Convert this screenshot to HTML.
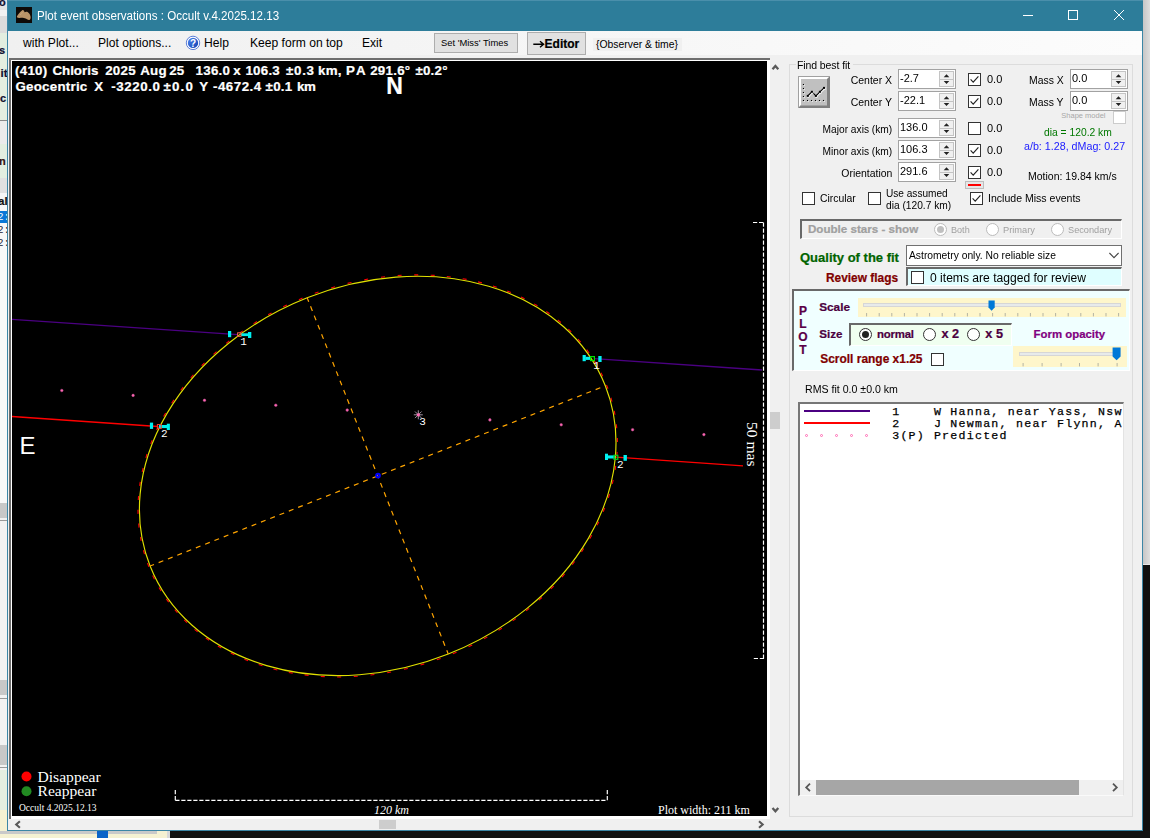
<!DOCTYPE html>
<html>
<head>
<meta charset="utf-8">
<title>Plot event observations : Occult v.4.2025.12.13</title>
<style>
html,body{margin:0;padding:0;}
body{width:1150px;height:838px;overflow:hidden;position:relative;background:#111;font-family:"Liberation Sans",sans-serif;font-size:11px;color:#000;}
div,span,svg{position:absolute;box-sizing:border-box;}
.t{white-space:nowrap;line-height:1;}
.b{font-weight:bold;-webkit-text-stroke:.22px;}
.ser{font-family:"Liberation Serif",serif;}
.mono{font-family:"Liberation Mono",monospace;}
#lst .mono{-webkit-text-stroke:.25px #000;}
#win{left:7px;top:0;width:1136px;height:831px;background:#f0f0f0;border-left:1px solid #3c86a6;border-right:1px solid #3c86a6;border-bottom:1px solid #3c86a6;}
#title{left:8px;top:0;width:1135px;height:31px;background:#2d7d9a;}
#plot{left:12px;top:61px;width:755px;height:755px;background:#000;overflow:hidden;}
.cb{width:13px;height:13px;background:#fff;border:1px solid #333;}
.num{background:#fff;border:1px solid #a2a2a2;height:20px;}
.rad{width:13px;height:13px;border-radius:50%;background:#fff;border:1px solid #333;}
.lbl{font-size:11px;}
.w1,.w2{font-size:13.33px;letter-spacing:.25px;}
.w1{top:3px;}.w2{top:19px;}
.sunk{border-top:2px solid #696969;border-left:2px solid #696969;border-right:1px solid #fff;border-bottom:1px solid #fff;}
</style>
</head>
<body>
<!-- background: other windows peeking out -->
<div id="bgleft" style="left:0;top:0;width:8px;height:838px;background:#f2f2f2;"></div>
<div style="left:0;top:0;width:7px;height:10px;background:#e4e4e4;"></div>
<div style="left:0;top:16px;width:7px;height:17px;background:#dcdcdc;"></div>
<div style="left:0;top:33px;width:7px;height:87px;background:#e3eee0;"></div>
<div style="left:0;top:120px;width:7px;height:1px;background:#888;"></div>
<div style="left:0;top:121px;width:7px;height:23px;background:#ebebeb;"></div>
<div style="left:0;top:144px;width:7px;height:34px;background:#e3eee0;"></div>
<div style="left:0;top:178px;width:7px;height:15px;background:#e0e0e0;"></div>
<div style="left:0;top:193px;width:7px;height:18px;background:#f6f6f6;"></div>
<div style="left:0;top:211px;width:7px;height:12px;background:#0a78d7;"></div>
<div style="left:0;top:223px;width:7px;height:280px;background:#f8f8f8;"></div>
<div style="left:0;top:503px;width:7px;height:15px;background:#c8c8c8;"></div>
<div style="left:0;top:520px;width:7px;height:1px;background:#999;"></div>
<div style="left:0;top:680px;width:7px;height:15px;background:#c8c8c8;"></div>
<div style="left:0;top:698px;width:7px;height:1px;background:#999;"></div>
<div style="left:0;top:745px;width:7px;height:20px;background:#c8c8c8;"></div>
<div style="left:0;top:767px;width:7px;height:1px;background:#999;"></div>
<div style="left:0;top:770px;width:7px;height:40px;background:#e3eee0;"></div>
<div style="left:0;top:810px;width:7px;height:28px;background:#f5f1d2;"></div>
<span class="t b" style="left:-1px;top:-3px;font-size:11px;color:#113;">o</span>
<span class="t b" style="left:-1px;top:44.5px;font-size:11px;color:#113;">s</span>
<span class="t b" style="left:0.5px;top:68px;font-size:11.5px;color:#113;">it</span>
<span class="t b" style="left:0px;top:92.5px;font-size:11px;color:#113;">c</span>
<span class="t b" style="left:-1px;top:155.5px;font-size:11px;color:#311;">n</span>
<span class="t b" style="left:-2px;top:196px;font-size:11.5px;color:#111;">al</span>
<span class="t mono" style="left:-3px;top:212px;font-size:11px;color:#fff;">2:</span>
<span class="t mono" style="left:-3px;top:225px;font-size:11px;color:#223;">2:</span>
<span class="t mono" style="left:-3px;top:238px;font-size:11px;color:#223;">2:</span>
<!-- right strip -->
<div style="left:1143px;top:0;width:7px;height:565px;background:linear-gradient(90deg,#c6c6c6,#dedede);"></div>
<div style="left:1143px;top:564px;width:7px;height:1px;background:#e8e8e8;"></div>
<!-- bottom strip -->
<div id="bgbottom" style="left:0;top:831px;width:1150px;height:7px;background:#121212;"></div>
<div style="left:0;top:831px;width:167px;height:7px;background:#f5f1d2;"></div>
<div style="left:0;top:831px;width:157px;height:3px;background:#c9c9c9;"></div>
<div style="left:97px;top:831px;width:11px;height:7px;background:#0a64c8;"></div>
<div style="left:167px;top:831px;width:3px;height:7px;background:#d8d8d8;"></div>

<div id="win"></div>
<div id="title"></div>
<div style="left:8px;top:0;width:1135px;height:1px;background:#4a8fab;"></div>
<!-- title icon -->
<svg style="left:16px;top:7px;" width="16" height="16" viewBox="0 0 16 16"><defs><filter id="bl" x="-10%" y="-10%" width="120%" height="120%"><feGaussianBlur stdDeviation=".35"/></filter></defs><rect width="16" height="16" fill="#0e0a07"/><path filter="url(#bl)" d="M.9 9.6C1.6 7.4 4.4 4.6 6.3 3.2C7.2 2.6 8 3.6 8.6 5.2C9.6 4.6 10.6 4.4 11.6 5C13.2 6 14.4 8 14.6 9.8C14.8 11.4 14.4 12.6 13.4 12.9C12.4 13.2 11.2 12.6 10.2 11.8C9.4 11.2 8.6 11 7.8 10.9C6.4 10.6 5 10.8 3.6 10.9C2.2 11 .6 10.8 .9 9.6Z" fill="#b99468"/><path d="M4 8C5.2 6.4 6.4 5.4 7 5.6" stroke="#c9a57a" stroke-width="1" fill="none" filter="url(#bl)"/></svg>
<span class="t" id="ttl" style="left:37px;top:9.7px;font-size:12px;color:#fff;transform:scaleX(.966);transform-origin:0 0;">Plot event observations : Occult v.4.2025.12.13</span>
<svg style="left:1020px;top:8px;" width="110" height="14" viewBox="0 0 110 14"><g stroke="#fff" stroke-width="1" fill="none"><path d="M3 7.5H13"/><rect x="48.5" y="2.5" width="9" height="9"/><path d="M94 2L104 12M104 2L94 12"/></g></svg>
<!-- menu -->
<div style="left:8px;top:31px;width:1134px;height:24px;background:linear-gradient(90deg,#f0f0f0,#fcfcfc);"></div>
<span class="t" id="m1" style="left:23px;top:36.9px;font-size:12.1px;">with Plot...</span>
<span class="t" id="m2" style="left:98px;top:36.9px;font-size:12.1px;">Plot options...</span>
<svg style="left:185px;top:35px;" width="16" height="16" viewBox="185 35 16 16"><defs><linearGradient id="hg" x1="0" y1="0" x2="1" y2="1"><stop offset="0" stop-color="#4f86f0"/><stop offset="1" stop-color="#1040b0"/></linearGradient></defs><circle cx="193" cy="42.9" r="6.7" fill="#fff" stroke="#4a6fd2" stroke-width=".9"/><circle cx="193" cy="42.9" r="5.2" fill="url(#hg)"/><text x="193" y="46.6" font-family="Liberation Sans" font-weight="bold" font-size="10" fill="#fff" text-anchor="middle">?</text></svg>
<span class="t" id="m3" style="left:204px;top:36.9px;font-size:12.1px;">Help</span>
<span class="t" id="m4" style="left:250px;top:36.9px;font-size:12.1px;">Keep form on top</span>
<span class="t" id="m5" style="left:362px;top:36.9px;font-size:12.1px;">Exit</span>
<div style="left:434px;top:33px;width:84px;height:20px;background:#e1e1e1;border:1px solid #adadad;"></div>
<span class="t" id="bt1" style="left:441px;top:37.8px;font-size:9.4px;">Set 'Miss' Times</span>
<div style="left:527px;top:32px;width:59px;height:23px;background:#e1e1e1;border:1px solid #adadad;"></div>
<svg style="left:532px;top:39px;" width="14" height="10" viewBox="532 39 14 10"><path d="M533.3 44.2H543.4M540 41.2L543.6 44.2L540 47.2" stroke="#000" stroke-width="1.4" fill="none"/></svg><span class="t b" id="bt2" style="left:544.6px;top:38px;font-size:12px;">Editor</span>
<div style="left:593px;top:38.4px;width:89px;height:12.4px;background:#f0f0f0;"></div>
<span class="t" id="obs" style="left:596px;top:39.6px;font-size:10.4px;">{Observer &amp; time}</span>

<div id="pbox" style="left:9px;top:58px;width:761px;height:761px;background:#fff;border-top:2px solid #6e6e6e;border-left:2px solid #6e6e6e;"></div>
<div id="plot"></div>
<svg id="psvg" style="left:12px;top:61px;" width="755" height="755" viewBox="12 61 755 755">
<g fill="none">
<!-- chords -->
<path d="M12 319.3L238 334.6" stroke="#4b0082" stroke-width="1.3"/>
<path d="M594 358.6L762 370" stroke="#4b0082" stroke-width="1.3"/>
<path d="M12 416.5L158 426.5" stroke="#f00" stroke-width="1.3"/>
<path d="M616 457.2L743 465.8" stroke="#f00" stroke-width="1.3"/>
<!-- ellipse -->
<g transform="translate(377.7 475.9) rotate(-21.6)">
<path d="M246.2 -0.3 L246.2 3.7M245.6 13.2 L245.2 17.1M243.9 26.6 L243.1 30.5M240.9 39.8 L239.8 43.7M236.8 52.9 L235.4 56.7M231.5 65.8 L229.7 69.4M225.0 78.3 L223.0 81.8M217.5 90.4 L215.2 93.7M208.9 102.1 L206.4 105.3M199.3 113.3 L196.5 116.3M188.7 124.0 L185.7 126.7M177.2 134.0 L174.0 136.5M164.8 143.4 L161.5 145.7M151.6 152.1 L148.2 154.1M137.7 160.0 L134.1 161.9M123.1 167.2 L119.4 168.8M107.9 173.5 L104.1 174.9M92.1 179.0 L88.3 180.2M76.0 183.6 L72.1 184.5M59.4 187.3 L55.5 188.0M42.6 190.1 L38.7 190.6M25.6 192.0 L21.6 192.3M8.4 192.9 L4.4 193.0M-8.7 192.9 L-12.7 192.7M-25.9 191.9 L-29.9 191.6M-42.9 190.1 L-46.8 189.5M-59.7 187.2 L-63.6 186.5M-76.2 183.5 L-80.1 182.5M-92.3 178.9 L-96.1 177.7M-108.0 173.5 L-111.7 172.0M-123.1 167.1 L-126.8 165.5M-137.7 160.0 L-141.2 158.1M-151.6 152.1 L-155.0 150.0M-164.7 143.5 L-168.0 141.1M-177.0 134.1 L-180.1 131.6M-188.5 124.1 L-191.4 121.4M-199.1 113.6 L-201.8 110.6M-208.7 102.4 L-211.2 99.3M-217.3 90.8 L-219.5 87.5M-224.8 78.7 L-226.8 75.2M-231.3 66.2 L-232.9 62.6M-236.6 53.5 L-237.9 49.7M-240.8 40.4 L-241.8 36.5M-243.8 27.2 L-244.4 23.2M-245.6 13.8 L-245.9 9.8M-246.2 0.3 L-246.2 -3.7M-245.6 -13.2 L-245.2 -17.1M-243.9 -26.6 L-243.1 -30.5M-240.9 -39.8 L-239.8 -43.7M-236.8 -52.9 L-235.4 -56.7M-231.5 -65.8 L-229.7 -69.4M-225.0 -78.3 L-223.0 -81.8M-217.5 -90.4 L-215.2 -93.7M-208.9 -102.1 L-206.4 -105.3M-199.3 -113.3 L-196.5 -116.3M-188.7 -124.0 L-185.7 -126.7M-177.2 -134.0 L-174.0 -136.5M-164.8 -143.4 L-161.5 -145.7M-151.6 -152.1 L-148.2 -154.1M-137.7 -160.0 L-134.1 -161.9M-123.1 -167.2 L-119.4 -168.8M-107.9 -173.5 L-104.1 -174.9M-92.1 -179.0 L-88.3 -180.2M-76.0 -183.6 L-72.1 -184.5M-59.4 -187.3 L-55.5 -188.0M-42.6 -190.1 L-38.7 -190.6M-25.6 -192.0 L-21.6 -192.3M-8.4 -192.9 L-4.4 -193.0M8.7 -192.9 L12.7 -192.7M25.9 -191.9 L29.9 -191.6M42.9 -190.1 L46.8 -189.5M59.7 -187.2 L63.6 -186.5M76.2 -183.5 L80.1 -182.5M92.3 -178.9 L96.1 -177.7M108.0 -173.5 L111.7 -172.0M123.1 -167.1 L126.8 -165.5M137.7 -160.0 L141.2 -158.1M151.6 -152.1 L155.0 -150.0M164.7 -143.5 L168.0 -141.1M177.0 -134.1 L180.1 -131.6M188.5 -124.1 L191.4 -121.4M199.1 -113.6 L201.8 -110.6M208.7 -102.4 L211.2 -99.3M217.3 -90.8 L219.5 -87.5M224.8 -78.7 L226.8 -75.2M231.3 -66.2 L232.9 -62.6M236.6 -53.5 L237.9 -49.7M240.8 -40.4 L241.8 -36.5M243.8 -27.2 L244.4 -23.2M245.6 -13.8 L245.9 -9.8" stroke="#f00" stroke-width="1.1"/>
<ellipse rx="244.8" ry="191.6" stroke="#e0e000" stroke-width="1.15"/>
<path d="M-244.8 0H244.8 M0 -191.6V191.6" stroke="#ffa500" stroke-width="1.2" stroke-dasharray="5 5" stroke-dashoffset=".8"/>
</g>
<circle cx="378" cy="475.6" r="1.8" stroke="#0000ff" stroke-width="2.1"/>
<circle cx="61.8" cy="390.5" r="1.3" fill="#ff69b4" stroke="#c04a8c" stroke-width=".5"/><circle cx="133.1" cy="395.4" r="1.3" fill="#ff69b4" stroke="#c04a8c" stroke-width=".5"/><circle cx="204.5" cy="400.3" r="1.3" fill="#ff69b4" stroke="#c04a8c" stroke-width=".5"/><circle cx="275.8" cy="405.2" r="1.3" fill="#ff69b4" stroke="#c04a8c" stroke-width=".5"/><circle cx="347.2" cy="410.1" r="1.3" fill="#ff69b4" stroke="#c04a8c" stroke-width=".5"/><circle cx="489.9" cy="419.9" r="1.3" fill="#ff69b4" stroke="#c04a8c" stroke-width=".5"/><circle cx="561.2" cy="424.8" r="1.3" fill="#ff69b4" stroke="#c04a8c" stroke-width=".5"/><circle cx="632.6" cy="429.7" r="1.3" fill="#ff69b4" stroke="#c04a8c" stroke-width=".5"/><circle cx="703.9" cy="434.6" r="1.3" fill="#ff69b4" stroke="#c04a8c" stroke-width=".5"/>
<!-- predicted star -->
<g stroke="#b0a0b0" stroke-width=".9"><path d="M413.8 414.8H422.8M418.3 410.3V419.3M415 411.5L421.6 418.1M415 418.1L421.6 411.5"/></g>
<circle cx="418.3" cy="414.8" r="1.6" fill="#ff69b4"/>
<!-- event markers -->
<g fill="#00f0f0" stroke="none">
<rect x="228" y="331" width="3.2" height="6.2"/><rect x="241" y="333.3" width="7.5" height="2.8"/><rect x="248" y="332" width="3.3" height="6"/>
<rect x="582.6" y="355" width="3.2" height="6.2"/><rect x="585.5" y="356.8" width="5.5" height="3.1"/><rect x="598.3" y="356" width="3.3" height="6"/>
<rect x="149.9" y="422.6" width="3.2" height="6.3"/><rect x="159" y="425" width="8.5" height="3.1"/><rect x="166.8" y="423.7" width="3.1" height="6.3"/>
<rect x="605" y="453.7" width="3" height="6.3"/><rect x="607.8" y="455.4" width="7" height="3.1"/><rect x="623.5" y="455" width="3.4" height="5.8"/>
</g>
<rect x="237.6" y="332.8" width="3.4" height="3.6" stroke="#f0604a" stroke-width="1"/>
<rect x="157.4" y="424.5" width="3.8" height="4" stroke="#f03a2a" stroke-width="1"/>
<rect x="590.6" y="356.6" width="3.8" height="4" stroke="#00e000" stroke-width="1.2"/>
<rect x="614" y="455.3" width="3.8" height="4" stroke="#00d020" stroke-width="1.2"/>
<!-- rulers -->
<g stroke="#fff" stroke-width="1.2" stroke-dasharray="4.2 1.8">
<path d="M753 222.5H764M763.5 222.5V658.5M764 658.5H753"/>
<path d="M175.3 790V800.3M175.3 800.3H607.3M607.3 800.3V790"/>
</g>
</g>
<circle cx="26.5" cy="776.5" r="5" fill="#f00"/>
<circle cx="26.5" cy="791.2" r="5" fill="#228b22"/>
</svg>
<!-- plot scrollbars -->
<div style="left:770px;top:58px;width:11px;height:761px;background:#f0f0f0;"></div>
<div style="left:770px;top:412px;width:10px;height:17px;background:#cdcdcd;"></div>
<svg style="left:768px;top:58px;" width="16" height="761" viewBox="768 58 16 761"><g stroke="#595959" stroke-width="2.3" fill="none"><path d="M772.5 69.2L775.4 66L778.3 69.2"/><path d="M772.5 808L775.4 811.2L778.3 808"/></g></svg>
<div style="left:9px;top:819px;width:761px;height:11px;background:#f0f0f0;"></div>
<div style="left:379px;top:820px;width:17px;height:9px;background:#cdcdcd;"></div>
<svg style="left:9px;top:819px;" width="761" height="12" viewBox="9 819 761 12"><g stroke="#595959" stroke-width="2.1" fill="none"><path d="M19.9 821.2L16.2 824.5L19.9 827.8"/><path d="M759 821.2L762.7 824.5L759 827.8"/></g></svg>
<!-- right panel -->
<div style="left:789px;top:64px;width:344px;height:753px;border:1px solid #dcdcdc;"></div>
<div style="left:796px;top:58px;width:57px;height:14px;background:#f0f0f0;"></div>
<span class="t" id="fbf" style="left:797.3px;top:59.7px;font-size:11.18px;transform:scaleX(0.939);transform-origin:0 50%;color:#000;letter-spacing:-.1px;">Find best fit</span>
<svg style="left:798px;top:76px;" width="32" height="32" viewBox="798 76 32 32"><rect x="798" y="76" width="32" height="32" fill="#a0a0a0"/><rect x="799" y="77" width="31" height="31" fill="#808080"/><path d="M799 77H829L827 79V105H801L799 107Z" fill="#fff"/><rect x="801" y="79" width="26" height="26.5" fill="#c0c0c0"/><rect x="803.55" y="84.80" width="1.1" height="1.1" fill="#fff"/><rect x="802.90" y="83.95" width="1.1" height="1.1" fill="#000"/><rect x="803.55" y="88.80" width="1.1" height="1.1" fill="#fff"/><rect x="802.90" y="87.95" width="1.1" height="1.1" fill="#000"/><rect x="803.55" y="92.80" width="1.1" height="1.1" fill="#fff"/><rect x="802.90" y="91.95" width="1.1" height="1.1" fill="#000"/><rect x="803.55" y="96.80" width="1.1" height="1.1" fill="#fff"/><rect x="802.90" y="95.95" width="1.1" height="1.1" fill="#000"/><rect x="803.55" y="100.80" width="1.1" height="1.1" fill="#fff"/><rect x="802.90" y="99.95" width="1.1" height="1.1" fill="#000"/><rect x="807.60" y="100.80" width="1.1" height="1.1" fill="#fff"/><rect x="806.95" y="99.95" width="1.1" height="1.1" fill="#000"/><rect x="811.60" y="100.80" width="1.1" height="1.1" fill="#fff"/><rect x="810.95" y="99.95" width="1.1" height="1.1" fill="#000"/><rect x="815.60" y="100.80" width="1.1" height="1.1" fill="#fff"/><rect x="814.95" y="99.95" width="1.1" height="1.1" fill="#000"/><rect x="819.60" y="100.80" width="1.1" height="1.1" fill="#fff"/><rect x="818.95" y="99.95" width="1.1" height="1.1" fill="#000"/><rect x="823.60" y="100.80" width="1.1" height="1.1" fill="#fff"/><rect x="822.95" y="99.95" width="1.1" height="1.1" fill="#000"/><path d="M807.8 95.9L811.9 91.8L815.9 95.9L819.9 91.8L824.0 87.9" stroke="#fff" stroke-width="1.1" fill="none" transform="translate(.6 .9)"/><path d="M807.8 95.9L811.9 91.8L815.9 95.9L819.9 91.8L824.0 87.9" stroke="#000" stroke-width="1.1" fill="none"/><rect x="807.30" y="95.70" width="2" height="2" fill="#fff"/><rect x="806.80" y="94.90" width="2" height="2" fill="#000"/><rect x="811.40" y="91.60" width="2" height="2" fill="#fff"/><rect x="810.90" y="90.80" width="2" height="2" fill="#000"/><rect x="815.40" y="95.70" width="2" height="2" fill="#fff"/><rect x="814.90" y="94.90" width="2" height="2" fill="#000"/><rect x="819.40" y="91.60" width="2" height="2" fill="#fff"/><rect x="818.90" y="90.80" width="2" height="2" fill="#000"/><rect x="823.50" y="87.70" width="2" height="2" fill="#fff"/><rect x="823.00" y="86.90" width="2" height="2" fill="#000"/></svg>
<span class="t" id="rl0" style="right:258px;top:74.6px;font-size:11.18px;transform:scaleX(0.939);transform-origin:100% 50%;">Center X</span>
<div class="num" style="left:898px;top:69px;width:57.5px;"></div><span class="t" style="left:900.2px;top:72.1px;font-size:11.7px;transform:scaleX(.94);transform-origin:0 50%;">-2.7</span><div style="left:938.5px;top:71px;width:15px;height:16px;background:#f0f0f0;border:1px solid #c4c4c4;"></div><div style="left:939.5px;top:78.5px;width:13px;height:1px;background:#c4c4c4;"></div><svg style="left:938.5px;top:71px;" width="15" height="16" viewBox="0 0 15 16"><path d="M4.7 6.2L7.5 3.2L10.3 6.2Z M4.7 10L7.5 13L10.3 10Z" fill="#222"/></svg>
<div class="cb" style="left:968px;top:72.5px;border-color:#333;"></div><svg style="left:968px;top:72.5px;" width="13" height="13" viewBox="0 0 13 13"><path d="M2.6 6.4L5.2 9.2L10.4 3.4" stroke="#222" stroke-width="1.15" fill="none"/></svg>
<span class="t" style="left:986.6px;top:72.9px;font-size:11.7px;color:#000;transform:scaleX(.94);transform-origin:0 50%;">0.0</span>
<span class="t" id="rl1" style="right:258px;top:96.6px;font-size:11.18px;transform:scaleX(0.939);transform-origin:100% 50%;">Center Y</span>
<div class="num" style="left:898px;top:91px;width:57.5px;"></div><span class="t" style="left:900.2px;top:94.1px;font-size:11.7px;transform:scaleX(.94);transform-origin:0 50%;">-22.1</span><div style="left:938.5px;top:93px;width:15px;height:16px;background:#f0f0f0;border:1px solid #c4c4c4;"></div><div style="left:939.5px;top:100.5px;width:13px;height:1px;background:#c4c4c4;"></div><svg style="left:938.5px;top:93px;" width="15" height="16" viewBox="0 0 15 16"><path d="M4.7 6.2L7.5 3.2L10.3 6.2Z M4.7 10L7.5 13L10.3 10Z" fill="#222"/></svg>
<div class="cb" style="left:968px;top:94.5px;border-color:#333;"></div><svg style="left:968px;top:94.5px;" width="13" height="13" viewBox="0 0 13 13"><path d="M2.6 6.4L5.2 9.2L10.4 3.4" stroke="#222" stroke-width="1.15" fill="none"/></svg>
<span class="t" style="left:986.6px;top:94.9px;font-size:11.7px;color:#000;transform:scaleX(.94);transform-origin:0 50%;">0.0</span>
<span class="t" id="rl2" style="right:258px;top:123.7px;font-size:10.86px;transform:scaleX(0.939);transform-origin:100% 50%;">Major axis (km)</span>
<div class="num" style="left:898px;top:118px;width:57.5px;"></div><span class="t" style="left:900.2px;top:121.1px;font-size:11.7px;transform:scaleX(.94);transform-origin:0 50%;">136.0</span><div style="left:938.5px;top:120px;width:15px;height:16px;background:#f0f0f0;border:1px solid #c4c4c4;"></div><div style="left:939.5px;top:127.5px;width:13px;height:1px;background:#c4c4c4;"></div><svg style="left:938.5px;top:120px;" width="15" height="16" viewBox="0 0 15 16"><path d="M4.7 6.2L7.5 3.2L10.3 6.2Z M4.7 10L7.5 13L10.3 10Z" fill="#222"/></svg>
<div class="cb" style="left:968px;top:121.5px;border-color:#333;"></div>
<span class="t" style="left:986.6px;top:121.9px;font-size:11.7px;color:#000;transform:scaleX(.94);transform-origin:0 50%;">0.0</span>
<span class="t" id="rl3" style="right:258px;top:145.7px;font-size:10.86px;transform:scaleX(0.939);transform-origin:100% 50%;">Minor axis (km)</span>
<div class="num" style="left:898px;top:140px;width:57.5px;"></div><span class="t" style="left:900.2px;top:143.1px;font-size:11.7px;transform:scaleX(.94);transform-origin:0 50%;">106.3</span><div style="left:938.5px;top:142px;width:15px;height:16px;background:#f0f0f0;border:1px solid #c4c4c4;"></div><div style="left:939.5px;top:149.5px;width:13px;height:1px;background:#c4c4c4;"></div><svg style="left:938.5px;top:142px;" width="15" height="16" viewBox="0 0 15 16"><path d="M4.7 6.2L7.5 3.2L10.3 6.2Z M4.7 10L7.5 13L10.3 10Z" fill="#222"/></svg>
<div class="cb" style="left:968px;top:143.5px;border-color:#333;"></div><svg style="left:968px;top:143.5px;" width="13" height="13" viewBox="0 0 13 13"><path d="M2.6 6.4L5.2 9.2L10.4 3.4" stroke="#222" stroke-width="1.15" fill="none"/></svg>
<span class="t" style="left:986.6px;top:143.9px;font-size:11.7px;color:#000;transform:scaleX(.94);transform-origin:0 50%;">0.0</span>
<span class="t" id="rl4" style="right:258px;top:167.6px;font-size:11.13px;transform:scaleX(0.939);transform-origin:100% 50%;">Orientation</span>
<div class="num" style="left:898px;top:162px;width:57.5px;"></div><span class="t" style="left:900.2px;top:165.1px;font-size:11.7px;transform:scaleX(.94);transform-origin:0 50%;">291.6</span><div style="left:938.5px;top:164px;width:15px;height:16px;background:#f0f0f0;border:1px solid #c4c4c4;"></div><div style="left:939.5px;top:171.5px;width:13px;height:1px;background:#c4c4c4;"></div><svg style="left:938.5px;top:164px;" width="15" height="16" viewBox="0 0 15 16"><path d="M4.7 6.2L7.5 3.2L10.3 6.2Z M4.7 10L7.5 13L10.3 10Z" fill="#222"/></svg>
<div class="cb" style="left:968px;top:165.5px;border-color:#333;"></div><svg style="left:968px;top:165.5px;" width="13" height="13" viewBox="0 0 13 13"><path d="M2.6 6.4L5.2 9.2L10.4 3.4" stroke="#222" stroke-width="1.15" fill="none"/></svg>
<span class="t" style="left:986.6px;top:165.9px;font-size:11.7px;color:#000;transform:scaleX(.94);transform-origin:0 50%;">0.0</span>
<span class="t" id="mx" style="left:1028.5px;top:74.6px;font-size:11.08px;transform:scaleX(0.939);transform-origin:0 50%;color:#000;">Mass X</span>
<span class="t" id="my" style="left:1028.5px;top:96.6px;font-size:11.08px;transform:scaleX(0.939);transform-origin:0 50%;color:#000;">Mass Y</span>
<div class="num" style="left:1069.5px;top:69px;width:58px;"></div><span class="t" style="left:1071.7px;top:72.1px;font-size:11.7px;transform:scaleX(.94);transform-origin:0 50%;">0.0</span><div style="left:1110.5px;top:71px;width:15px;height:16px;background:#f0f0f0;border:1px solid #c4c4c4;"></div><div style="left:1111.5px;top:78.5px;width:13px;height:1px;background:#c4c4c4;"></div><svg style="left:1110.5px;top:71px;" width="15" height="16" viewBox="0 0 15 16"><path d="M4.7 6.2L7.5 3.2L10.3 6.2Z M4.7 10L7.5 13L10.3 10Z" fill="#222"/></svg>
<div class="num" style="left:1069.5px;top:91px;width:58px;"></div><span class="t" style="left:1071.7px;top:94.1px;font-size:11.7px;transform:scaleX(.94);transform-origin:0 50%;">0.0</span><div style="left:1110.5px;top:93px;width:15px;height:16px;background:#f0f0f0;border:1px solid #c4c4c4;"></div><div style="left:1111.5px;top:100.5px;width:13px;height:1px;background:#c4c4c4;"></div><svg style="left:1110.5px;top:93px;" width="15" height="16" viewBox="0 0 15 16"><path d="M4.7 6.2L7.5 3.2L10.3 6.2Z M4.7 10L7.5 13L10.3 10Z" fill="#222"/></svg>
<span class="t" id="shp" style="left:1061.3px;top:112.3px;font-size:7.5px;color:#a8a8a8;">Shape model</span>
<div style="left:1112.5px;top:111px;width:13px;height:13px;background:#fff;border:1px solid #ccc;"></div>
<span class="t" id="dia" style="left:1043.6px;top:127.3px;font-size:10.97px;transform:scaleX(0.939);transform-origin:0 50%;color:#007800;">dia = 120.2 km</span>
<span class="t" id="ab" style="left:1024.1px;top:140.8px;font-size:11.40px;transform:scaleX(0.939);transform-origin:0 50%;color:#1a1aff;">a/b: 1.28, dMag: 0.27</span>
<span class="t" id="mot" style="left:1028.2px;top:170.6px;font-size:11.18px;transform:scaleX(0.939);transform-origin:0 50%;color:#000;">Motion: 19.84 km/s</span>
<div style="left:964.5px;top:181px;width:19px;height:7.5px;background:#e6e6e6;border:1px solid #bdbdbd;"></div>
<div style="left:967.5px;top:184px;width:13px;height:2px;background:#f00;"></div>
<div class="cb" style="left:802px;top:192px;border-color:#333;"></div>
<span class="t" id="circ" style="left:819.6px;top:193.3px;font-size:11.08px;transform:scaleX(0.939);transform-origin:0 50%;color:#000;">Circular</span>
<div class="cb" style="left:867.7px;top:192px;border-color:#333;"></div>
<span class="t" id="ua1" style="left:886.4px;top:187.6px;font-size:10.76px;transform:scaleX(0.939);transform-origin:0 50%;color:#000;">Use assumed</span>
<span class="t" id="ua2" style="left:886.4px;top:199.7px;font-size:10.86px;transform:scaleX(0.939);transform-origin:0 50%;color:#000;">dia (120.7 km)</span>
<div class="cb" style="left:969.8px;top:192px;border-color:#333;"></div><svg style="left:969.8px;top:192px;" width="13" height="13" viewBox="0 0 13 13"><path d="M2.6 6.4L5.2 9.2L10.4 3.4" stroke="#222" stroke-width="1.15" fill="none"/></svg>
<span class="t" id="inc" style="left:988.3px;top:193.2px;font-size:11.24px;transform:scaleX(0.939);transform-origin:0 50%;color:#000;">Include Miss events</span>
<!-- right panel 2 -->
<div class="sunk" style="left:800px;top:218.5px;width:322px;height:20.5px;background:#f0f0f0;"></div>
<span class="t b" id="dbl" style="left:808px;top:222.7px;font-size:11.6px;color:#a0a0a0;">Double stars - show</span>
<div class="rad" style="left:933.6px;top:223px;border-color:#bcbcbc;"></div><div style="left:936.6px;top:226px;width:7px;height:7px;border-radius:50%;background:#c0c0c0;"></div>
<span class="t" id="both" style="left:951.3px;top:225.3px;font-size:9.69px;transform:scaleX(0.939);transform-origin:0 50%;color:#a0a0a0;">Both</span>
<div class="rad" style="left:985.8px;top:223px;border-color:#bcbcbc;"></div>
<span class="t" id="prim" style="left:1003.3px;top:225.2px;font-size:9.90px;transform:scaleX(0.939);transform-origin:0 50%;color:#a0a0a0;">Primary</span>
<div class="rad" style="left:1050.6px;top:223px;border-color:#bcbcbc;"></div>
<span class="t" id="seco" style="left:1068.3px;top:225.2px;font-size:9.80px;transform:scaleX(0.939);transform-origin:0 50%;color:#a0a0a0;">Secondary</span>
<span class="t b" id="qual" style="left:800px;top:251.0px;font-size:13px;color:#006400;">Quality of the fit</span>
<div style="left:905.6px;top:245px;width:216.6px;height:20.5px;background:#fff;border:1px solid #707070;"></div>
<span class="t" id="astro" style="left:908.6px;top:250.0px;font-size:10.97px;transform:scaleX(0.939);transform-origin:0 50%;color:#000;">Astrometry only. No reliable size</span>
<svg style="left:1107px;top:250px;" width="14" height="10" viewBox="0 0 14 10"><path d="M2.4 3L7 7.6L11.6 3" stroke="#444" stroke-width="1.1" fill="none"/></svg>
<span class="t b" id="rev" style="left:826px;top:273.2px;font-size:11.9px;color:#800000;">Review flags</span>
<div class="sunk" style="left:906px;top:267.4px;width:216px;height:19px;background:#dffeff;"></div>
<div class="cb" style="left:910.6px;top:271px;border-color:#333;"></div>
<span class="t" id="items" style="left:929.6px;top:271.5px;font-size:12.89px;transform:scaleX(0.939);transform-origin:0 50%;color:#000;">0 items are tagged for review</span>
<div class="sunk" style="left:791.5px;top:289.3px;width:338.5px;height:81.5px;background:#f0ffff;"></div>
<span class="t b" style="left:795px;width:16px;text-align:center;top:305.1px;font-size:12px;color:#5a0046;">P</span>
<span class="t b" style="left:795px;width:16px;text-align:center;top:318.1px;font-size:12px;color:#5a0046;">L</span>
<span class="t b" style="left:795px;width:16px;text-align:center;top:331.1px;font-size:12px;color:#5a0046;">O</span>
<span class="t b" style="left:795px;width:16px;text-align:center;top:344.1px;font-size:12px;color:#5a0046;">T</span>
<span class="t b" id="scale" style="left:819.2px;top:301.6px;font-size:11.8px;color:#4b0040;">Scale</span>
<span class="t b" id="size" style="left:819.2px;top:327.7px;font-size:11.6px;color:#4b0040;">Size</span>
<span class="t b" id="scroll" style="left:820.2px;top:354.3px;font-size:11.96px;color:#800000;">Scroll range x1.25</span>
<div class="cb" style="left:931px;top:353px;border-color:#333;"></div>
<div style="left:857.6px;top:298px;width:268.6px;height:18.6px;background:#fef6cb;"></div>
<div style="left:862.6px;top:303px;width:258px;height:3.6px;background:#e7eaea;border:1px solid #d6d6d6;"></div>
<svg style="left:857px;top:298px;" width="270" height="19" viewBox="857 298 270 19"><g fill="#b4b4a4"><rect x="866.1" y="313" width="1" height="3.4"/><rect x="878.7" y="313" width="1" height="3.4"/><rect x="891.3" y="313" width="1" height="3.4"/><rect x="903.9" y="313" width="1" height="3.4"/><rect x="916.5" y="313" width="1" height="3.4"/><rect x="929.1" y="313" width="1" height="3.4"/><rect x="941.7" y="313" width="1" height="3.4"/><rect x="954.3" y="313" width="1" height="3.4"/><rect x="966.9" y="313" width="1" height="3.4"/><rect x="979.5" y="313" width="1" height="3.4"/><rect x="992.1" y="313" width="1" height="3.4"/><rect x="1004.7" y="313" width="1" height="3.4"/><rect x="1017.3" y="313" width="1" height="3.4"/><rect x="1029.9" y="313" width="1" height="3.4"/><rect x="1042.5" y="313" width="1" height="3.4"/><rect x="1055.1" y="313" width="1" height="3.4"/><rect x="1067.7" y="313" width="1" height="3.4"/><rect x="1080.3" y="313" width="1" height="3.4"/><rect x="1092.9" y="313" width="1" height="3.4"/><rect x="1105.5" y="313" width="1" height="3.4"/><rect x="1118.1" y="313" width="1" height="3.4"/></g><path d="M988.5 300.6H994.7V307.6L991.6 310.7L988.5 307.6Z" fill="#0078d7"/></svg>
<div class="sunk" style="left:849px;top:323px;width:163px;height:22.5px;background:#f0fff0;"></div>
<div class="rad" style="left:859px;top:328px;border-color:#333;"></div><div style="left:862px;top:331px;width:7px;height:7px;border-radius:50%;background:#222;"></div>
<span class="t b" id="normal" style="left:877px;top:329.2px;font-size:11.4px;letter-spacing:-.2px;color:#4b0040;">normal</span>
<div class="rad" style="left:922.8px;top:328px;border-color:#333;"></div>
<span class="t b" id="x2" style="left:941.5px;top:328.4px;font-size:12.7px;color:#4b0040;">x 2</span>
<div class="rad" style="left:966.5px;top:328px;border-color:#333;"></div>
<span class="t b" id="x5" style="left:985.3px;top:328.4px;font-size:12.7px;color:#4b0040;">x 5</span>
<span class="t b" id="opac" style="left:1033.6px;top:329.2px;font-size:11.4px;color:#800080;">Form opacity</span>
<div style="left:1012.6px;top:346px;width:114.6px;height:20.6px;background:#fef6cb;"></div>
<div style="left:1019px;top:352px;width:101.4px;height:3.6px;background:#e7eaea;border:1px solid #d6d6d6;"></div>
<svg style="left:1012px;top:346px;" width="116" height="21" viewBox="1012 346 116 21"><g fill="#b4b4a4"><rect x="1022.6" y="363" width="1" height="3.4"/><rect x="1041.6" y="363" width="1" height="3.4"/><rect x="1060.6" y="363" width="1" height="3.4"/><rect x="1079.0" y="363" width="1" height="3.4"/><rect x="1097.6" y="363" width="1" height="3.4"/><rect x="1116.6" y="363" width="1" height="3.4"/></g><path d="M1112.6 347.4H1120.6V356.4L1116.6 360.2L1112.6 356.4Z" fill="#0078d7"/></svg>
<span class="t" id="rms" style="left:804.6px;top:383.5px;font-size:11.29px;transform:scaleX(0.939);transform-origin:0 50%;color:#000;">RMS fit 0.0 ±0.0 km</span>
<div style="left:797.5px;top:402px;width:326.5px;height:394px;background:#fff;border-top:2px solid #767676;border-left:2px solid #767676;border-right:1px solid #e3e3e3;border-bottom:1px solid #fafafa;overflow:hidden;" id="lst"><div style="left:4.5px;top:6px;width:65.5px;height:2px;background:#4b0082;"></div><div style="left:4.5px;top:18px;width:65.5px;height:2px;background:#f00;"></div><div style="left:5.4px;top:30px;width:3px;height:3px;border-radius:50%;border:1px solid #ff69b4;"></div><div style="left:20.4px;top:30px;width:3px;height:3px;border-radius:50%;border:1px solid #ff69b4;"></div><div style="left:35.4px;top:30px;width:3px;height:3px;border-radius:50%;border:1px solid #ff69b4;"></div><div style="left:50.4px;top:30px;width:3px;height:3px;border-radius:50%;border:1px solid #ff69b4;"></div><div style="left:65.4px;top:30px;width:3px;height:3px;border-radius:50%;border:1px solid #ff69b4;"></div><span class="t mono" style="left:92.7px;top:1.9px;font-size:11.6px;letter-spacing:1.25px;">1</span><span class="t mono" style="left:134.4px;top:1.9px;font-size:11.6px;letter-spacing:1.25px;">W Hanna, near Yass, Nsw</span><span class="t mono" style="left:92.7px;top:13.9px;font-size:11.6px;letter-spacing:1.25px;">2</span><span class="t mono" style="left:134.4px;top:13.9px;font-size:11.6px;letter-spacing:1.25px;">J Newman, near Flynn, A</span><span class="t mono" style="left:92.7px;top:25.9px;font-size:11.6px;letter-spacing:1.25px;">3(P)</span><span class="t mono" style="left:134.4px;top:25.9px;font-size:11.6px;letter-spacing:1.25px;">Predicted</span><div style="left:0;top:375.6px;width:324px;height:15.6px;background:#f0f0f0;"></div><div style="left:16.5px;top:375.6px;width:262.6px;height:15.6px;background:#a6a6a6;"></div><svg style="left:2px;top:376px;" width="14" height="15" viewBox="0 0 14 15"><path d="M8 3.6L4.2 7.4L8 11.2" stroke="#555" stroke-width="1.8" fill="none"/></svg><svg style="left:308px;top:376px;" width="14" height="15" viewBox="0 0 14 15"><path d="M5 3.6L8.8 7.4L5 11.2" stroke="#555" stroke-width="1.8" fill="none"/></svg></div>
<!-- end right panel -->
<!-- plot texts -->
<div id="ptxt" style="left:12px;top:61px;width:755px;height:755px;overflow:hidden;color:#fff;">
<span class="t b w1" id="a0" style="left:3.1px;">(410)</span><span class="t b w1" id="a1" style="left:40.4px;letter-spacing:0px;">Chloris</span><span class="t b w1" id="a2" style="left:93.2px;">2025</span><span class="t b w1" id="a3" style="left:128.2px;">Aug</span><span class="t b w1" id="a4" style="left:157.2px;">25</span><span class="t b w1" id="a5" style="left:183.6px;">136.0</span><span class="t b w1" id="a6" style="left:221.2px;">x</span><span class="t b w1" id="a7" style="left:233.4px;">106.3</span><span class="t b w1" id="a8" style="left:274.0px;letter-spacing:0.7px;">±0.3</span><span class="t b w1" id="a9" style="left:306.0px;">km,</span><span class="t b w1" id="a10" style="left:334.0px;letter-spacing:1.1px;font-kerning:none;">PA</span><span class="t b w1" id="a11" style="left:358.2px;">291.6°</span><span class="t b w1" id="a12" style="left:403.4px;">±0.2°</span>
<span class="t b w2" id="b0" style="left:3.4px;">Geocentric</span><span class="t b w2" id="b1" style="left:82.2px;">X</span><span class="t b w2" id="b2" style="left:99.2px;letter-spacing:0.58px;">-3220.0</span><span class="t b w2" id="b3" style="left:151.4px;letter-spacing:1.2px;">±0.0</span><span class="t b w2" id="b4" style="left:187.2px;">Y</span><span class="t b w2" id="b5" style="left:201.0px;letter-spacing:0.5px;">-4672.4</span><span class="t b w2" id="b6" style="left:253.6px;">±0.1</span><span class="t b w2" id="b7" style="left:285.0px;letter-spacing:-0.5px;">km</span>
<span class="t b" id="N" style="left:374.3px;top:14.3px;font-size:23px;">N</span>
<span class="t" id="E" style="left:7.6px;top:372.8px;font-size:24px;">E</span>
<span class="t mono" id="lb0" style="left:228.2px;top:275.5px;font-size:11px;">1</span>
<span class="t mono" id="lb1" style="left:581.2px;top:299.5px;font-size:11px;">1</span>
<span class="t mono" id="lb2" style="left:148.9px;top:367.8px;font-size:11px;">2</span>
<span class="t mono" id="lb3" style="left:605.1px;top:398.8px;font-size:11px;">2</span>
<span class="t mono" id="lb4" style="left:407.2px;top:355.5px;font-size:11px;">3</span>
<span class="t ser" id="dis" style="left:25.5px;top:707.8px;font-size:15.6px;">Disappear</span>
<span class="t ser" id="rea" style="left:25.5px;top:722.3px;font-size:15.6px;">Reappear</span>
<span class="t ser" id="occ" style="left:7px;top:742.5px;font-size:9.5px;">Occult 4.2025.12.13</span>
<span class="t ser" id="km120" style="left:362px;top:742.5px;font-size:12px;font-style:italic;">120 km</span>
<span class="t ser" id="pw" style="left:646px;top:742.5px;font-size:12px;">Plot width: 211 km</span>
<span class="t ser" id="mas" style="left:748px;top:361px;font-size:15.6px;transform:rotate(90deg);transform-origin:0 0;">50 mas</span>
</div>

</body>
</html>
